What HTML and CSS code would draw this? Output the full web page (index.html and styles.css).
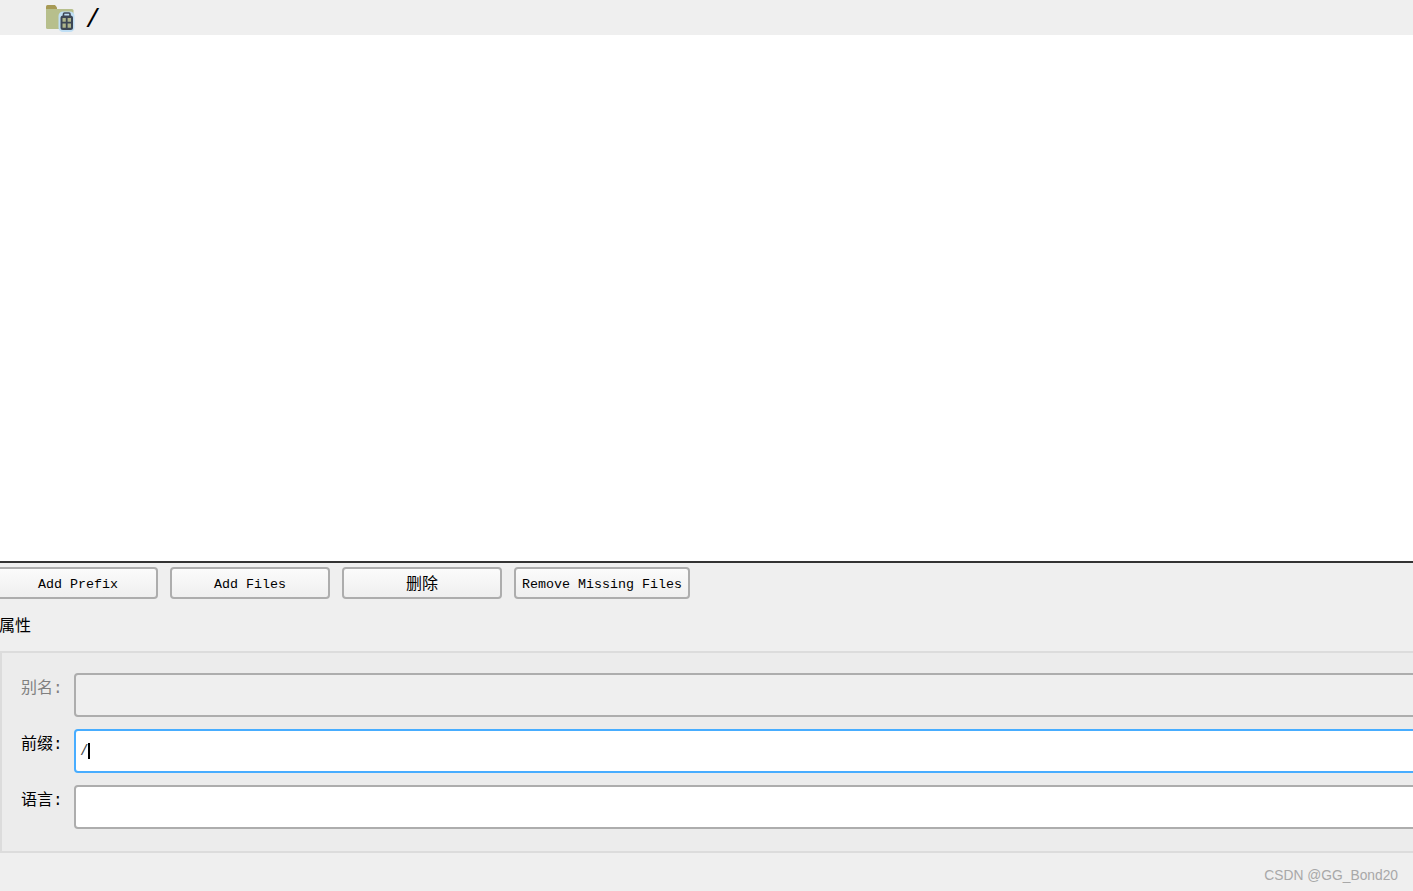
FILE: index.html
```html
<!DOCTYPE html>
<html lang="zh-CN">
<head>
<meta charset="utf-8">
<title>Resources</title>
<link rel="stylesheet" href="styles.css">
</head>
<body>
<div class="tree">
  <div class="tree-row">
    <svg class="folder-icon" width="30" height="28" viewBox="0 0 30 28" aria-hidden="true">
      <path d="M1 5.500V2.500Q1 1 2.500 1H10L12 3.500V5.500Z" fill="#a79a55"/>
      <path d="M1 5H27Q28.500 5 28.500 6.500V23.500Q28.500 25 27 25H2.500Q1 25 1 23.500Z" fill="#b7bf8c"/>
      <rect x="13.500" y="7.500" width="16" height="20.500" rx="4.500" fill="#c0dff5"/>
      <path d="M18.500 12V10Q18.500 9 19.500 9H24Q25 9 25 10V12" fill="none" stroke="#3d4654" stroke-width="1.600"/>
      <rect x="15.500" y="11.500" width="12.500" height="14.500" rx="2.500" fill="#3d4654"/>
      <path d="M17.500 14H20.800V17.800H17.500ZM22.600 14H26V17.800H22.600ZM17.500 19.400H20.800V23.800H17.500ZM22.600 19.400H26V23.800H22.600Z" fill="#aeb58c"/>
    </svg>
    <span class="tree-label">/</span>
  </div>
</div>
<div class="bottom">
  <div class="toolbar">
    <button class="btn">Add Prefix</button>
    <button class="btn">Add Files</button>
    <button class="btn btn-cjk">删除</button>
    <button class="btn btn-auto">Remove Missing Files</button>
  </div>
  <div class="group-title">属性</div>
  <div class="group">
    <div class="field is-disabled">
      <label class="field-label">别名:</label>
      <div class="input input-disabled"></div>
    </div>
    <div class="field">
      <label class="field-label">前缀:</label>
      <div class="input input-focus"><span class="input-text">/</span><span class="caret"></span></div>
    </div>
    <div class="field">
      <label class="field-label">语言:</label>
      <div class="input"></div>
    </div>
  </div>
  <div class="watermark">CSDN @GG_Bond20</div>
</div>
</body>
</html>
```
FILE: styles.css
```css
* { box-sizing: border-box; }
html, body { margin: 0; height: 100%; }
body {
  width: 1413px;
  height: 891px;
  overflow: hidden;
  display: flex;
  flex-direction: column;
  background: #ffffff;
  color: #000;
  font-family: "Liberation Mono", "Noto Sans CJK SC", monospace;
  font-size: 13.33px;
}
.tree { flex: 0 0 561px; background: #fff; }
.tree-row {
  height: 35px;
  background: #efefef;
  display: flex;
  align-items: flex-start;
  padding: 4px 0 0 45px;
  gap: 10px;
}
.folder-icon { display: block; }
.tree-label {
  font-family: "Liberation Mono", monospace;
  font-size: 26px;
  line-height: 30px;
  padding-top: 1px;
}
.bottom {
  flex: 1;
  position: relative;
  background: #efefef;
  border-top: 2px solid #333;
  padding-top: 4px;
}
.toolbar { display: flex; gap: 12px; height: 32px; }
.btn {
  width: 160px;
  height: 32px;
  margin: 0;
  padding: 3px 6px 0;
  border: 2px solid #adadad;
  border-radius: 4px;
  background: linear-gradient(#fbfbfb, #efefef);
  color: #000;
  font: inherit;
  line-height: 16px;
}
.btn.btn-cjk { font-size: 16px; padding-top: 3px; }
.btn:first-child { width: 158px; border-left: 0; border-radius: 0 4px 4px 0; }
.btn-auto { width: 176px; }
.group-title {
  font-family: "Noto Sans CJK SC", sans-serif;
  font-size: 16px;
  line-height: 20px;
  margin-top: 15px;
  margin-left: -1px;
}
.group {
  margin-top: 17px;
  margin-right: -20px;
  height: 202px;
  background: #ececec;
  border: 2px solid #dcdcdc;
  padding: 20px 0 0 19px;
  display: flex;
  flex-direction: column;
  gap: 12px;
}
.field { display: flex; height: 44px; }
.field-label {
  flex: 0 0 53px;
  padding-top: 5px;
  font-family: "Liberation Mono", "Noto Sans CJK SC", monospace;
  font-size: 16px;
  line-height: 22px;
}
.is-disabled .field-label { color: #808080; }
.input {
  flex: 1;
  display: flex;
  align-items: center;
  padding-left: 4px;
  background: #fff;
  border: 2px solid #adadad;
  border-radius: 4px;
}
.input-disabled { background: #efefef; }
.input-focus { border-color: #48adff; }
.input-text { font-size: 14px; color: #444; line-height: 16px; margin-right: -0.400px; }
.caret { width: 2px; height: 16px; background: #000; }
.watermark {
  position: absolute;
  right: 15px;
  bottom: 7px;
  font-family: "Liberation Sans", sans-serif;
  font-size: 13.800px;
  line-height: 16px;
  color: #a8a8a8;
}
```
